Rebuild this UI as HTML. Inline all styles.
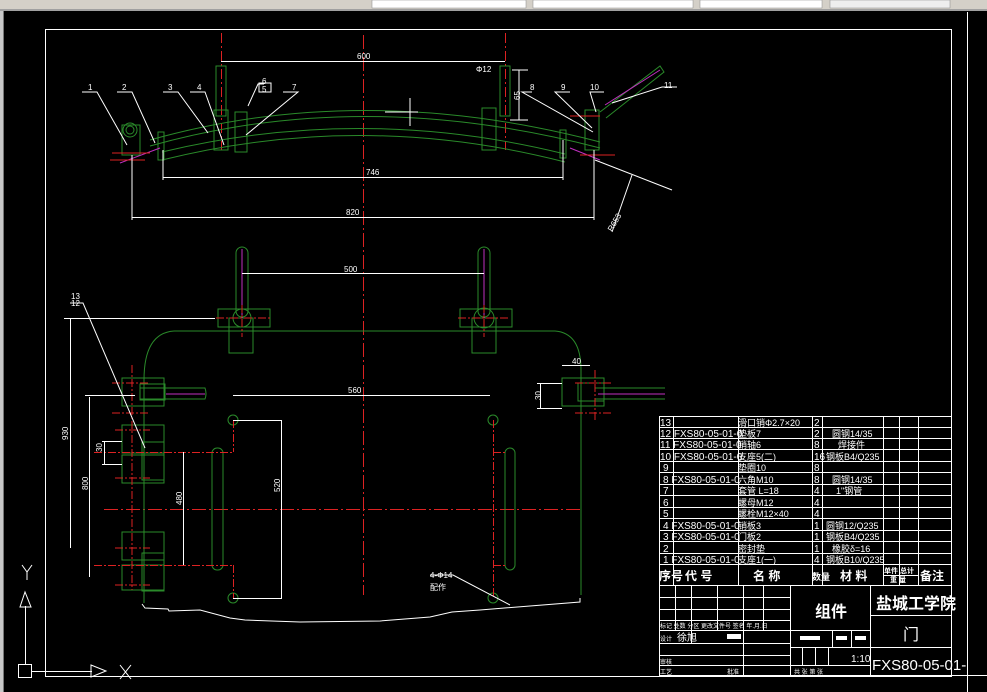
<!DOCTYPE html>
<html><head><meta charset="utf-8"><style>
html,body{margin:0;padding:0;background:#000;width:987px;height:692px;overflow:hidden}
svg{display:block}
text{font-family:"Liberation Sans","Noto Sans CJK SC",sans-serif;fill:#fff}
</style></head><body>
<svg width="987" height="692" viewBox="0 0 987 692" xmlns="http://www.w3.org/2000/svg">
<rect x="0" y="0" width="987" height="692" fill="#000"/>
<!-- toolbar -->
<rect x="0" y="0" width="987" height="11" fill="#d4d0c8"/>
<rect x="0" y="9" width="987" height="2" fill="#a0a0a0"/>
<rect x="200" y="0" width="170" height="8" fill="#d4d0c8"/>
<rect x="372" y="0" width="154" height="8" fill="#fff" stroke="#888" stroke-width="0.5"/>
<rect x="533" y="0" width="160" height="8" fill="#fff" stroke="#888" stroke-width="0.5"/>
<rect x="700" y="0" width="122" height="8" fill="#fff" stroke="#888" stroke-width="0.5"/>
<rect x="830" y="0" width="120" height="8" fill="#eee" stroke="#888" stroke-width="0.5"/>
<rect x="0" y="11" width="4" height="681" fill="#c8c8c8"/>
<rect x="3" y="11" width="1" height="681" fill="#777"/>

<g fill="none" stroke-width="1">
<!-- frames -->
<rect x="45.5" y="29.5" width="906" height="647" stroke="#fff"/>
<line x1="967.5" y1="12" x2="967.5" y2="692" stroke="#fff"/>
<line x1="952" y1="675.5" x2="987" y2="675.5" stroke="#fff"/>

<!-- center lines -->
<line x1="363.5" y1="35" x2="363.5" y2="595" stroke="#d22" stroke-dasharray="14,3,2,3"/>
<line x1="104" y1="509.5" x2="582" y2="509.5" stroke="#d22" stroke-dasharray="14,3,2,3"/>
<line x1="221.5" y1="33" x2="221.5" y2="150" stroke="#d22" stroke-dasharray="10,3,2,3"/>
<line x1="505.5" y1="33" x2="505.5" y2="150" stroke="#d22" stroke-dasharray="10,3,2,3"/>

<!-- top view arcs -->
<g stroke="#2a8a2a">
<path d="M150,140 Q363,80 600,142"/>
<path d="M150,146 Q363,86 600,148"/>
<path d="M162,152 Q363,104 565,154"/>
<path d="M162,160 Q363,110 565,162"/>
<rect x="214" y="110" width="14" height="40"/>
<rect x="235" y="112" width="12" height="40"/>
<rect x="482" y="108" width="14" height="42"/>
<rect x="216" y="66" width="10" height="50"/>
<rect x="500" y="66" width="10" height="50"/>
<circle cx="130" cy="130" r="7"/><circle cx="130" cy="130" r="4"/>
<rect x="122" y="125" width="18" height="30"/>
<rect x="158" y="132" width="6" height="28"/>
<rect x="560" y="130" width="6" height="28"/>
<rect x="585" y="110" width="14" height="40"/>
<path d="M600,112 L660,66 L664,72 L606,118"/>
</g>
<g stroke="#c030c0"><path d="M120,163 L160,148"/><path d="M570,148 L600,160"/><path d="M605,105 L660,70"/></g>
<g stroke="#d22"><line x1="112" y1="153" x2="150" y2="153"/><line x1="110" y1="160" x2="145" y2="160"/><line x1="580" y1="155" x2="615" y2="155"/><line x1="570" y1="116" x2="600" y2="116"/></g>

<!-- top view dims -->
<g stroke="#fff">
<line x1="221" y1="61.5" x2="505" y2="61.5"/>
<line x1="163" y1="177.5" x2="563" y2="177.5"/>
<line x1="163" y1="150" x2="163" y2="180"/><line x1="563" y1="140" x2="563" y2="180"/>
<line x1="132" y1="217.5" x2="594" y2="217.5"/>
<line x1="132" y1="155" x2="132" y2="220"/><line x1="594" y1="150" x2="594" y2="220"/>
<line x1="512" y1="70" x2="528" y2="70"/><line x1="519" y1="70" x2="519" y2="120"/><line x1="510" y1="120" x2="528" y2="120"/>
<line x1="595" y1="160" x2="672" y2="190"/><line x1="632" y1="175" x2="612" y2="232"/>
<line x1="385" y1="112" x2="418" y2="112"/><line x1="410" y1="98" x2="410" y2="126"/>
<polyline points="82,92 97,92 127,145"/><polyline points="117,92 132,92 155,143"/>
<polyline points="163,92 178,92 208,133"/><polyline points="190,92 205,92 224,145"/>
<polyline points="283,92 298,92 246,135"/><polyline points="264,84 258,84 248,106"/>
<polyline points="532,92 522,92 593,132"/><polyline points="570,92 555,92 592,128"/>
<polyline points="604,92 590,92 596,112"/><polyline points="677,87 662,87 612,103"/>
<rect x="259" y="83" width="12" height="9"/>
</g>
</g>
<g font-size="8">
<text x="357" y="59">600</text><text x="366" y="175">746</text><text x="346" y="215">820</text>
<text x="476" y="72">Φ12</text><text x="88" y="90">1</text><text x="122" y="90">2</text><text x="168" y="90">3</text><text x="197" y="90">4</text>
<text x="262" y="84">6</text><text x="262" y="92">5</text><text x="292" y="90">7</text><text x="530" y="90">8</text><text x="561" y="90">9</text><text x="590" y="90">10</text><text x="664" y="88">11</text>
<text x="520" y="100" transform="rotate(-90 520 100)">65</text>
<text x="612" y="232" transform="rotate(-60 612 232)">R653</text>
</g>

<!-- front view -->
<g fill="none" stroke-width="1">
<g stroke="#2a8a2a">
<path d="M174,331 L555,331 Q581,333 581,370 L581,595"/>
<path d="M174,331 Q144,333 144,380 L144,603"/>
<rect x="236" y="247" width="12" height="70" rx="6"/>
<rect x="478" y="247" width="12" height="70" rx="6"/>
<rect x="218" y="309" width="52" height="18"/><rect x="229" y="318" width="24" height="35"/>
<rect x="460" y="309" width="52" height="18"/><rect x="472" y="318" width="24" height="35"/>
<circle cx="242" cy="318" r="9"/><circle cx="484" cy="318" r="10"/>
<rect x="122" y="378" width="42" height="28"/><rect x="140" y="384" width="25" height="16"/>
<path d="M140,388 L205,388 Q207,394 205,399 L140,399"/>
<rect x="122" y="425" width="42" height="28"/><rect x="122" y="455" width="42" height="28"/>
<rect x="122" y="532" width="42" height="28"/><rect x="122" y="565" width="42" height="25"/>
<rect x="142" y="442" width="22" height="38"/><rect x="142" y="553" width="22" height="38"/>
<rect x="562" y="378" width="42" height="28"/><rect x="578" y="383" width="26" height="18"/>
<line x1="595" y1="388" x2="665" y2="388"/><line x1="595" y1="399" x2="665" y2="399"/>
<rect x="212" y="448" width="11" height="122" rx="5"/>
<rect x="505" y="448" width="10" height="122" rx="5"/>
<circle cx="233" cy="420" r="5"/><circle cx="493" cy="420" r="5"/>
<circle cx="233" cy="598" r="5"/><circle cx="493" cy="598" r="5"/>
</g>
<g stroke="#c030c0"><line x1="242" y1="249" x2="242" y2="318"/><line x1="484" y1="249" x2="484" y2="318"/><line x1="166" y1="394" x2="205" y2="394"/><line x1="598" y1="394" x2="665" y2="394"/></g>
<g stroke="#d22" stroke-dasharray="8,2,2,2">
<line x1="216" y1="318" x2="270" y2="318"/><line x1="458" y1="318" x2="510" y2="318"/>
<line x1="242" y1="305" x2="242" y2="337"/><line x1="484" y1="305" x2="484" y2="337"/>
<line x1="112" y1="383" x2="150" y2="383"/><line x1="112" y1="413" x2="150" y2="413"/>
<line x1="575" y1="383" x2="613" y2="383"/><line x1="575" y1="413" x2="613" y2="413"/>
<line x1="132" y1="365" x2="132" y2="590"/><line x1="595" y1="370" x2="595" y2="420"/>
<line x1="94" y1="452.5" x2="233" y2="452.5"/><line x1="94" y1="565.5" x2="233" y2="565.5"/>
<line x1="233.5" y1="420" x2="233.5" y2="452"/><line x1="233.5" y1="565" x2="233.5" y2="598"/>
<line x1="493.5" y1="420" x2="493.5" y2="598"/><line x1="493" y1="452.5" x2="505" y2="452.5"/><line x1="493" y1="565.5" x2="505" y2="565.5"/>
<line x1="115" y1="430" x2="150" y2="430"/><line x1="115" y1="478" x2="150" y2="478"/><line x1="115" y1="548" x2="150" y2="548"/><line x1="115" y1="585" x2="150" y2="585"/>
</g>
<g stroke="#fff">
<line x1="242" y1="273.5" x2="484" y2="273.5"/>
<line x1="233" y1="395.5" x2="490" y2="395.5"/>
<line x1="233" y1="420.5" x2="282" y2="420.5"/><line x1="233" y1="598.5" x2="282" y2="598.5"/><line x1="281.5" y1="420" x2="281.5" y2="598"/>
<line x1="183.5" y1="452" x2="183.5" y2="565"/>
<line x1="89.5" y1="397" x2="89.5" y2="577"/><line x1="85" y1="395.5" x2="135" y2="395.5"/>
<line x1="70.5" y1="318" x2="70.5" y2="548"/><line x1="64" y1="318.5" x2="215" y2="318.5"/>
<line x1="104.5" y1="442" x2="104.5" y2="464"/><line x1="102" y1="441.5" x2="122" y2="441.5"/><line x1="102" y1="464.5" x2="122" y2="464.5"/>
<line x1="540.5" y1="384" x2="540.5" y2="408"/><line x1="537" y1="383.5" x2="562" y2="383.5"/><line x1="537" y1="408.5" x2="562" y2="408.5"/>
<line x1="562" y1="365.5" x2="590" y2="365.5"/>
<polyline points="70,303 83,303 145,448"/>
<polyline points="430,575 453,575 510,605"/>
<polyline points="142,604 145,608 168,609 169,611 200,610 230,618 245,620 300,622 380,621 430,617 452,612 480,610 580,602 580,598"/>
</g>
</g>
<g font-size="8">
<text x="344" y="272">500</text><text x="348" y="393">560</text><text x="572" y="364">40</text>
<text x="71" y="299">13</text><text x="71" y="306">12</text>
<text x="68" y="440" transform="rotate(-90 68 440)">930</text>
<text x="88" y="490" transform="rotate(-90 88 490)">800</text>
<text x="182" y="505" transform="rotate(-90 182 505)">480</text>
<text x="280" y="492" transform="rotate(-90 280 492)">520</text>
<text x="102" y="452" transform="rotate(-90 102 452)">30</text>
<text x="541" y="400" transform="rotate(-90 541 400)">30</text>
<text x="430" y="578">4-Φ14</text><text x="430" y="590">配作</text>
</g>

<!-- UCS -->
<g fill="none" stroke="#fff">
<rect x="18.5" y="664.5" width="13" height="13"/>
<line x1="25.5" y1="664" x2="25.5" y2="606"/>
<path d="M25,592 L20,607 L31,607 Z"/>
<line x1="31" y1="671.5" x2="92" y2="671.5"/>
<path d="M91,665 L106,671 L91,677 Z"/>
<path d="M22,565 L27,572 L32,565 M27,572 L27,580"/>
<path d="M120,665 L131,679 M131,665 L120,679"/>
</g>

<!-- title block -->
<g fill="none" stroke="#fff">
<rect x="659.5" y="416.5" width="292" height="259"/>
<g>
<line x1="659" y1="427.5" x2="952" y2="427.5"/><line x1="659" y1="438.5" x2="952" y2="438.5"/><line x1="659" y1="449.5" x2="952" y2="449.5"/>
<line x1="659" y1="461.5" x2="952" y2="461.5"/><line x1="659" y1="472.5" x2="952" y2="472.5"/><line x1="659" y1="484.5" x2="952" y2="484.5"/>
<line x1="659" y1="495.5" x2="952" y2="495.5"/><line x1="659" y1="507.5" x2="952" y2="507.5"/><line x1="659" y1="518.5" x2="952" y2="518.5"/>
<line x1="659" y1="530.5" x2="952" y2="530.5"/><line x1="659" y1="541.5" x2="952" y2="541.5"/><line x1="659" y1="553.5" x2="952" y2="553.5"/>
<line x1="659" y1="564.5" x2="952" y2="564.5"/><line x1="659" y1="585.5" x2="952" y2="585.5"/>
</g>
<line x1="673.5" y1="416" x2="673.5" y2="585"/><line x1="738.5" y1="416" x2="738.5" y2="585"/>
<line x1="812.5" y1="416" x2="812.5" y2="585"/><line x1="822.5" y1="416" x2="822.5" y2="585"/>
<line x1="883.5" y1="416" x2="883.5" y2="585"/><line x1="899.5" y1="416" x2="899.5" y2="585"/><line x1="918.5" y1="416" x2="918.5" y2="585"/>
<line x1="883" y1="575.5" x2="918" y2="575.5"/>
<!-- lower block -->
<line x1="790.5" y1="585" x2="790.5" y2="676"/><line x1="870.5" y1="585" x2="870.5" y2="676"/>
<line x1="659" y1="597.5" x2="790" y2="597.5"/><line x1="659" y1="609.5" x2="790" y2="609.5"/><line x1="659" y1="620.5" x2="790" y2="620.5"/>
<line x1="659" y1="630.5" x2="790" y2="630.5"/><line x1="659" y1="643.5" x2="790" y2="643.5"/><line x1="659" y1="655.5" x2="790" y2="655.5"/><line x1="659" y1="665.5" x2="790" y2="665.5"/>
<line x1="675.5" y1="585" x2="675.5" y2="630"/><line x1="691.5" y1="585" x2="691.5" y2="643"/><line x1="717.5" y1="585" x2="717.5" y2="630"/>
<line x1="743.5" y1="585" x2="743.5" y2="676"/><line x1="763.5" y1="585" x2="763.5" y2="630"/>
<line x1="790" y1="630.5" x2="870" y2="630.5"/><line x1="790" y1="647.5" x2="870" y2="647.5"/><line x1="790" y1="665.5" x2="870" y2="665.5"/>
<line x1="832.5" y1="630" x2="832.5" y2="647"/><line x1="851.5" y1="630" x2="851.5" y2="647"/>
<line x1="802.5" y1="647" x2="802.5" y2="665"/><line x1="815.5" y1="647" x2="815.5" y2="665"/><line x1="828.5" y1="647" x2="828.5" y2="665"/>
<line x1="870" y1="615.5" x2="952" y2="615.5"/><line x1="870" y1="647.5" x2="952" y2="647.5"/>
</g>
<g fill="#fff"><rect x="800" y="636" width="20" height="4"/><rect x="836" y="636" width="11" height="4"/><rect x="855" y="636" width="11" height="4"/><rect x="727" y="634" width="14" height="5"/></g>
<g font-size="10" font-family="Liberation Mono, monospace">
<text x="660" y="426">13</text><text x="738" y="426" font-size="9">滑口销Φ2.7×20</text><text x="814" y="426">2</text>
<text x="660" y="437">12 FXS80-05-01-0</text><text x="738" y="437" font-size="9">垫板7</text><text x="814" y="437">2</text><text x="832" y="437" font-size="9">圆钢14/35</text>
<text x="660" y="448">11 FXS80-05-01-0</text><text x="738" y="448" font-size="9">销轴6</text><text x="814" y="448">8</text><text x="838" y="448" font-size="9">焊接件</text>
<text x="660" y="460">10 FXS80-05-01-0</text><text x="738" y="460" font-size="9">支座5(二)</text><text x="814" y="460">16</text><text x="826" y="460" font-size="9">钢板B4/Q235</text>
<text x="663" y="471">9</text><text x="738" y="471" font-size="9">垫圈10</text><text x="814" y="471">8</text>
<text x="663" y="483">8 FXS80-05-01-0</text><text x="738" y="483" font-size="9">六角M10</text><text x="814" y="483">8</text><text x="832" y="483" font-size="9">圆钢14/35</text>
<text x="663" y="494">7</text><text x="738" y="494" font-size="9">套管 L=18</text><text x="814" y="494">4</text><text x="836" y="494" font-size="9">1"钢管</text>
<text x="663" y="506">6</text><text x="738" y="506" font-size="9">螺母M12</text><text x="814" y="506">4</text>
<text x="663" y="517">5</text><text x="738" y="517" font-size="9">螺栓M12×40</text><text x="814" y="517">4</text>
<text x="663" y="529">4 FXS80-05-01-0</text><text x="738" y="529" font-size="9">销板3</text><text x="814" y="529">1</text><text x="826" y="529" font-size="9">圆钢12/Q235</text>
<text x="663" y="540">3 FXS80-05-01-0</text><text x="738" y="540" font-size="9">门板2</text><text x="814" y="540">1</text><text x="826" y="540" font-size="9">钢板B4/Q235</text>
<text x="663" y="552">2</text><text x="738" y="552" font-size="9">密封垫</text><text x="814" y="552">1</text><text x="832" y="552" font-size="9">橡胶δ=16</text>
<text x="663" y="563">1 FXS80-05-01-0</text><text x="738" y="563" font-size="9">支座1(一)</text><text x="814" y="563">4</text><text x="826" y="563" font-size="9">钢板B10/Q235</text>
</g>
<g font-size="12" font-weight="bold">
<text x="659" y="580">序号</text><text x="685" y="580">代  号</text><text x="753" y="580">名  称</text><text x="812" y="580" font-size="9">数量</text>
<text x="840" y="580">材  料</text><text x="884" y="573" font-size="7">单件</text><text x="900" y="573" font-size="7">总计</text><text x="890" y="582" font-size="7">重  量</text><text x="920" y="580">备注</text>
<text x="815" y="617" font-size="16">组件</text>
<text x="876" y="609" font-size="16">盐城工学院</text>
<text x="903" y="640" font-size="16" font-weight="normal">门</text>
</g>
<g font-size="6">
<text x="660" y="628">标记 处数 分区 更改文件号 签名 年.月.日</text>
<text x="660" y="641">设计</text><text x="677" y="641" font-size="10">徐旭</text>
<text x="660" y="664">审核</text><text x="660" y="674">工艺</text><text x="727" y="674">批准</text>
<text x="794" y="674">共  张 第  张</text>
<text x="851" y="662" font-size="10">1:10</text>
</g>
<text x="872" y="670" font-size="15" font-family="Liberation Sans, sans-serif">FXS80-05-01-</text>
</svg>
</body></html>
